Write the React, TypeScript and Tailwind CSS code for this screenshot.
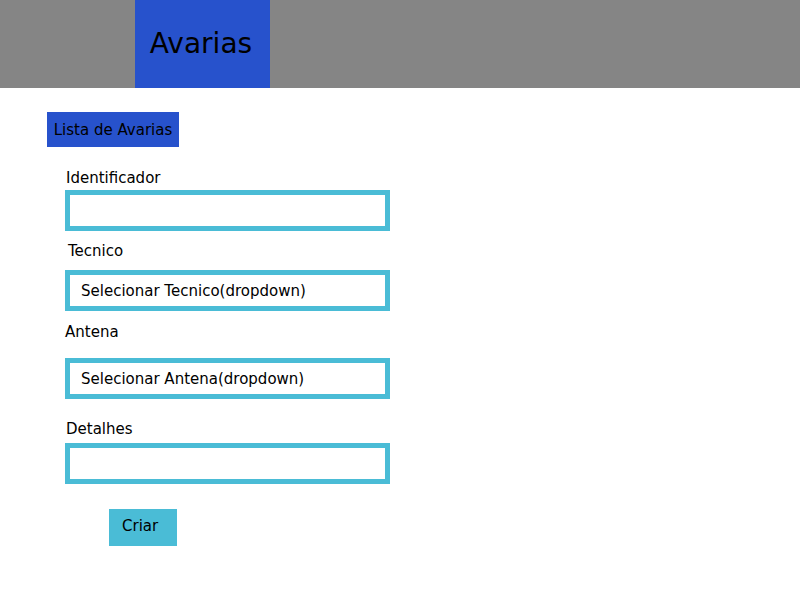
// Avarias form page
const font = { fontFamily: '"Comic Sans MS", "DejaVu Sans", sans-serif' };

const Field = ({
  label,
  value,
  labelClass,
  boxClass,
}: {
  label: string;
  value?: string;
  labelClass?: string;
  boxClass?: string;
}) => (
  <div className="flex flex-col">
    <span className={`text-[15px] leading-[20px] text-black ${labelClass ?? ''}`}>{label}</span>
    <div
      className={`w-[325px] h-[41px] border-[5px] border-[#4abcd6] bg-white flex items-center text-[15px] text-black ${boxClass ?? ''}`}
    >
      {value && <span className="pl-[11px] pt-[2px]">{value}</span>}
    </div>
  </div>
);

export default function App() {
  return (
    <div className="w-[800px] h-[600px] bg-white" style={font}>
      {/* Top bar */}
      <header className="h-[88px] bg-[#858585] flex">
        <div className="ml-[135px] w-[135px] h-full bg-[#2752cc] flex items-center justify-center">
          <span className="text-[28px] text-black pb-[1px] pr-[3px]">Avarias</span>
        </div>
      </header>

      <main className="pt-[24px] pl-[47px]">
        <div className="w-[132px] h-[35px] bg-[#2752cc] flex items-center justify-center text-[15px] text-black pt-[2px]">
          Lista de Avarias
        </div>

        <div className="pl-[18px] mt-[21px] flex flex-col">
          <Field label="Identificador" labelClass="pl-[1px]" boxClass="mt-[2px]" />
          <Field
            label="Tecnico"
            value="Selecionar Tecnico(dropdown)"
            labelClass="pl-[3px] mt-[10px]"
            boxClass="mt-[9px]"
          />
          <Field
            label="Antena"
            value="Selecionar Antena(dropdown)"
            labelClass="mt-[11px]"
            boxClass="mt-[16px]"
          />
          <Field label="Detalhes" labelClass="pl-[1px] mt-[20px]" boxClass="mt-[4px]" />

          <button className="ml-[44px] mt-[25px] w-[68px] h-[37px] bg-[#4abcd6] text-[15px] text-black text-left pl-[13px] pb-[3px]">
            Criar
          </button>
        </div>
      </main>
    </div>
  );
}
